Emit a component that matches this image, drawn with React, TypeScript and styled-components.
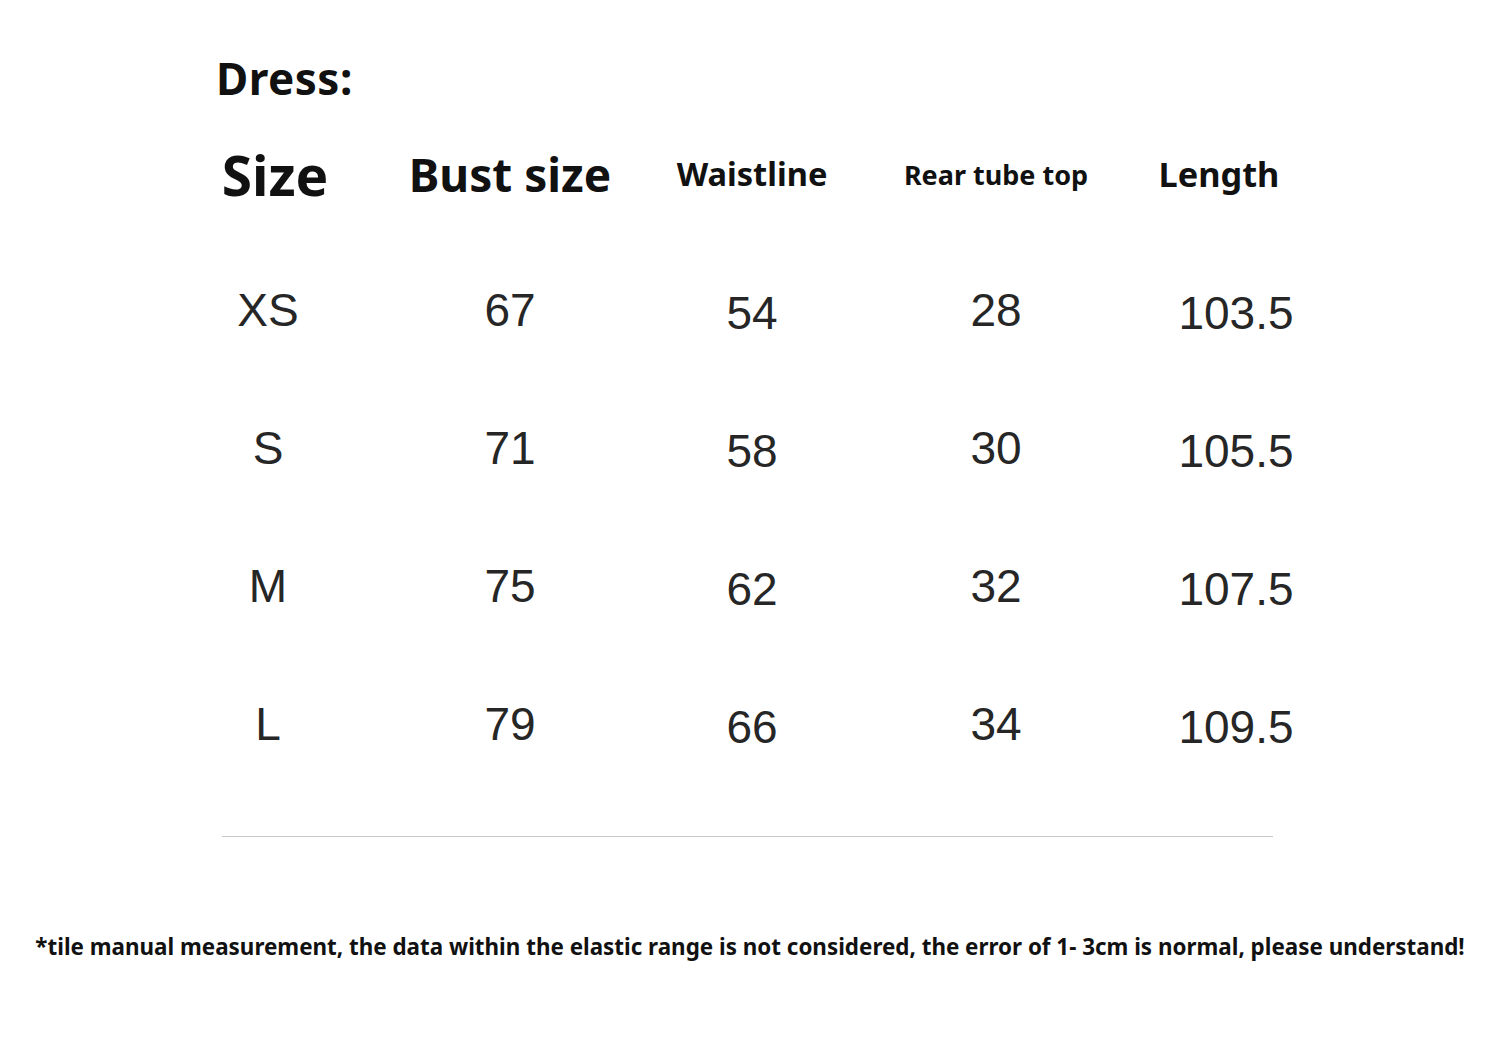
import { createGlobalStyle } from 'styled-components'
import styled from 'styled-components'

const GlobalStyle = createGlobalStyle`
  html, body {
    margin: 0;
    padding: 0;
    background: #ffffff;
  }
  body {
    font-family: 'Noto Sans', 'Liberation Sans', sans-serif;
    color: #111111;
  }
`

type Row = { size: string; bust: string; waist: string; rear: string; length: string }

const rows: Row[] = [
  { size: 'XS', bust: '67', waist: '54', rear: '28', length: '103.5' },
  { size: 'S', bust: '71', waist: '58', rear: '30', length: '105.5' },
  { size: 'M', bust: '75', waist: '62', rear: '32', length: '107.5' },
  { size: 'L', bust: '79', waist: '66', rear: '34', length: '109.5' },
]

const headers = [
  { label: 'Size', fontSize: 55, shift: 14 },
  { label: 'Bust size', fontSize: 46, shift: 0 },
  { label: 'Waistline', fontSize: 32.6, shift: 0 },
  { label: 'Rear tube top', fontSize: 27, shift: 4 },
  { label: 'Length', fontSize: 34.3, shift: -34 },
]

// small vertical nudges per column, as in the original chart
const drops = [0, 0, 3, 0, 3]
const nudges = [0, 0, 0, 4, 0]

const App = () => {
  return (
    <Page>
      <GlobalStyle />
      <Title>Dress:</Title>
      <Table>
        <HeaderRow>
          {headers.map(h => (
            <HeaderCell key={h.label} $fontSize={h.fontSize} $shift={h.shift}>
              {h.label}
            </HeaderCell>
          ))}
        </HeaderRow>
        <Body>
          {rows.map(r => (
            <DataRow key={r.size}>
              {[r.size, r.bust, r.waist, r.rear, r.length].map((v, i) => (
                <DataCell key={i} $drop={drops[i]} $nudge={nudges[i]}>
                  {v}
                </DataCell>
              ))}
            </DataRow>
          ))}
        </Body>
      </Table>
      <Divider />
      <Note>
        *tile manual measurement, the data within the elastic range is not
        considered, the error of 1- 3cm is normal, please understand!
      </Note>
    </Page>
  )
}

export default App

const Page = styled.div`
  width: 1500px;
  height: 1037px;
  background: #ffffff;
  overflow: hidden;
`

const Title = styled.h1`
  margin: 0;
  padding: 50px 0 0 216px;
  height: 134px;
  box-sizing: border-box;
  font-size: 44px;
  font-weight: 700;
  line-height: 56px;
  letter-spacing: 0.5px;
`

const Table = styled.div`
  margin-left: 147px;
  width: 1210px;
`

const HeaderRow = styled.div`
  display: grid;
  grid-template-columns: repeat(5, 242px);
  height: 80px;
  align-items: center;
`

const HeaderCell = styled.div<{ $fontSize: number; $shift: number }>`
  font-size: ${p => p.$fontSize}px;
  font-weight: 700;
  text-align: center;
  white-space: nowrap;
  line-height: 1;
  padding-left: ${p => (p.$shift > 0 ? p.$shift : 0)}px;
  padding-right: ${p => (p.$shift < 0 ? -p.$shift : 0)}px;
`

const Body = styled.div`
  padding-top: 27px;
`

const DataRow = styled.div`
  display: grid;
  grid-template-columns: repeat(5, 242px);
  height: 138px;
  align-items: center;
`

const DataCell = styled.div<{ $drop: number; $nudge: number }>`
  font-family: 'Liberation Sans', Arial, sans-serif;
  font-size: 46px;
  font-weight: 400;
  color: #262626;
  text-align: center;
  line-height: 1;
  padding-top: ${p => p.$drop * 2}px;
  padding-left: ${p => p.$nudge}px;
`

const Divider = styled.hr`
  margin: 43px 0 0 222px;
  width: 1051px;
  border: none;
  border-top: 1px solid #c8c8c8;
  height: 0;
`

const Note = styled.p`
  margin: 96px 0 0;
  text-align: center;
  font-size: 22.4px;
  font-weight: 700;
  line-height: 28px;
  white-space: nowrap;
`
